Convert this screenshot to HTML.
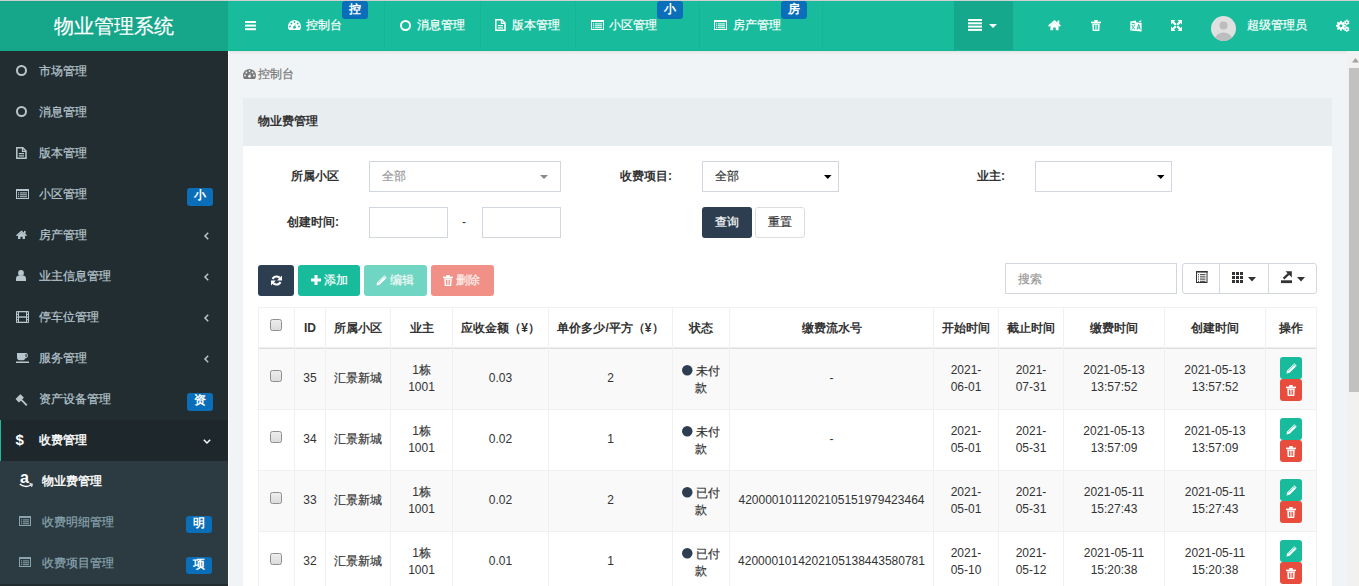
<!DOCTYPE html><html><head><meta charset="utf-8"><style>
html,body{margin:0;padding:0}
body{width:1359px;height:586px;overflow:hidden;position:relative;background:#f1f4f6;font-family:"Liberation Sans",sans-serif;font-size:12px;color:#333}
.t{position:absolute;white-space:nowrap}
.k{-webkit-text-stroke-width:0.2px}
.bd .k{-webkit-text-stroke-width:0}
.med .k{-webkit-text-stroke-width:0.4px}
.b{position:absolute}
.i{position:absolute;overflow:visible}
</style></head><body>
<div class="b" style="left:0px;top:0px;width:1359px;height:1px;background:#d2cfd0;"></div>
<div class="b" style="left:0px;top:1px;width:228px;height:50px;background:#16a68a;"></div>
<div class="t" style="left:0px;top:11px;font-size:20px;line-height:30px;color:#fff;font-weight:normal;width:228px;text-align:center"><span class="k">物业管理系统</span></div>
<div class="b" style="left:228px;top:1px;width:1131px;height:50px;background:#18bc9c;"></div>
<svg class="i" style="left:245px;top:21px;" width="11" height="10" viewBox="0 0 11 10"><rect x="0" y="0" width="11" height="2" fill="#fff"/><rect x="0" y="3.6" width="11" height="2" fill="#fff"/><rect x="0" y="7.2" width="11" height="2" fill="#fff"/></svg>
<div class="b" style="left:384px;top:1px;width:1px;height:50px;background:rgba(0,0,0,0.035);"></div>
<div class="b" style="left:480px;top:1px;width:1px;height:50px;background:rgba(0,0,0,0.035);"></div>
<div class="b" style="left:575px;top:1px;width:1px;height:50px;background:rgba(0,0,0,0.035);"></div>
<div class="b" style="left:699px;top:1px;width:1px;height:50px;background:rgba(0,0,0,0.035);"></div>
<div class="b" style="left:822px;top:1px;width:1px;height:50px;background:rgba(0,0,0,0.035);"></div>
<svg class="i" style="left:288px;top:20px;" width="13" height="10" viewBox="0 0 13 10"><path d="M1.02 10 A6.5 6.5 0 1 1 11.98 10 Z" fill="#fff"/><circle cx="6.5" cy="2" r="0.9" fill="#18bc9c"/><circle cx="3.4" cy="3.5" r="0.9" fill="#18bc9c"/><circle cx="9.6" cy="3.5" r="0.9" fill="#18bc9c"/><circle cx="2" cy="6.5" r="0.9" fill="#18bc9c"/><circle cx="11" cy="6.5" r="0.9" fill="#18bc9c"/><circle cx="6.5" cy="7.3" r="1.4" fill="#18bc9c"/><path d="M6.2 7 L7.3 3 L7.2 7.3Z" fill="#18bc9c"/></svg>
<div class="t" style="left:306px;top:15px;font-size:12px;line-height:20px;color:#fff;font-weight:normal;"><span class="k">控制台</span></div>
<div class="b" style="left:342px;top:1px;width:26px;height:18px;background:#0a6eb9;border-radius:3px"></div><div class="t bd" style="left:342px;top:0.30000000000000004px;width:26px;text-align:center;font-size:12px;line-height:18px;color:#fff;font-weight:bold">控</div>
<svg class="i" style="left:400px;top:19.5px;" width="11" height="11" viewBox="0 0 11 11"><circle cx="5.5" cy="5.5" r="4.5" fill="none" stroke="#fff" stroke-width="2"/></svg>
<div class="t" style="left:417px;top:15px;font-size:12px;line-height:20px;color:#fff;font-weight:normal;"><span class="k">消息管理</span></div>
<svg class="i" style="left:495px;top:19px;" width="11" height="12" viewBox="0 0 11 12"><path d="M0.8 0.8 H6.8 L10 4 V11.2 H0.8 Z" fill="none" stroke="#fff" stroke-width="1.5"/><path d="M6.5 0.8 V4.3 H10" fill="none" stroke="#fff" stroke-width="1.3"/><rect x="2.8" y="6" width="5.2" height="1.2" fill="#fff"/><rect x="2.8" y="8.3" width="5.2" height="1.2" fill="#fff"/></svg>
<div class="t" style="left:512px;top:15px;font-size:12px;line-height:20px;color:#fff;font-weight:normal;"><span class="k">版本管理</span></div>
<svg class="i" style="left:591px;top:20px;" width="13" height="10" viewBox="0 0 13 10"><rect x="0.5" y="0.5" width="12" height="9" fill="none" stroke="#fff" stroke-width="1"/><rect x="0" y="0" width="13" height="2" fill="#fff"/><rect x="2" y="3.4" width="1.2" height="1" fill="#fff"/><rect x="4" y="3.4" width="7" height="1" fill="#fff"/><rect x="2" y="5.3" width="1.2" height="1" fill="#fff"/><rect x="4" y="5.3" width="7" height="1" fill="#fff"/><rect x="2" y="7.199999999999999" width="1.2" height="1" fill="#fff"/><rect x="4" y="7.199999999999999" width="7" height="1" fill="#fff"/></svg>
<div class="t" style="left:609px;top:15px;font-size:12px;line-height:20px;color:#fff;font-weight:normal;"><span class="k">小区管理</span></div>
<div class="b" style="left:657px;top:1px;width:26px;height:18px;background:#0a6eb9;border-radius:3px"></div><div class="t bd" style="left:657px;top:0.30000000000000004px;width:26px;text-align:center;font-size:12px;line-height:18px;color:#fff;font-weight:bold">小</div>
<svg class="i" style="left:714px;top:20px;" width="13" height="10" viewBox="0 0 13 10"><rect x="0.5" y="0.5" width="12" height="9" fill="none" stroke="#fff" stroke-width="1"/><rect x="0" y="0" width="13" height="2" fill="#fff"/><rect x="2" y="3.4" width="1.2" height="1" fill="#fff"/><rect x="4" y="3.4" width="7" height="1" fill="#fff"/><rect x="2" y="5.3" width="1.2" height="1" fill="#fff"/><rect x="4" y="5.3" width="7" height="1" fill="#fff"/><rect x="2" y="7.199999999999999" width="1.2" height="1" fill="#fff"/><rect x="4" y="7.199999999999999" width="7" height="1" fill="#fff"/></svg>
<div class="t" style="left:733px;top:15px;font-size:12px;line-height:20px;color:#fff;font-weight:normal;"><span class="k">房产管理</span></div>
<div class="b" style="left:781px;top:1px;width:26px;height:18px;background:#0a6eb9;border-radius:3px"></div><div class="t bd" style="left:781px;top:0.30000000000000004px;width:26px;text-align:center;font-size:12px;line-height:18px;color:#fff;font-weight:bold">房</div>
<div class="b" style="left:954px;top:1px;width:59px;height:50px;background:rgba(0,0,0,0.1);"></div>
<svg class="i" style="left:968px;top:18.5px;" width="14" height="12" viewBox="0 0 14 12"><rect x="0" y="0" width="14" height="2" fill="#fff"/><rect x="0" y="3.3" width="14" height="2" fill="#fff"/><rect x="0" y="6.6" width="14" height="2" fill="#fff"/><rect x="0" y="9.9" width="14" height="2" fill="#fff"/></svg>
<svg class="i" style="left:989px;top:24px;" width="8" height="4" viewBox="0 0 8 4"><path d="M0 0 H8 L4.0 4 Z" fill="#fff"/></svg>
<svg class="i" style="left:1048px;top:19.8px;" width="13" height="10.2" viewBox="0 0 14 11"><path d="M7 0 L14 6 L12.6 7.3 L7 2.6 L1.4 7.3 L0 6 Z" fill="#fff"/><path d="M2.6 6.2 L7 2.7 L11.4 6.2 V11 H8.4 V8 H5.6 V11 H2.6 Z" fill="#fff"/><rect x="10.2" y="0.6" width="2" height="3.5" fill="#fff"/></svg>
<svg class="i" style="left:1091px;top:20px;" width="10" height="11" viewBox="0 0 10 11"><rect x="0" y="1.6" width="10" height="1.6" fill="#fff"/><rect x="3.3" y="0" width="3.4" height="2" fill="#fff"/><path d="M1.2 3.6 H8.8 L8.3 11 H1.7 Z" fill="#fff"/><rect x="3" y="4.8" width="0.9" height="5" fill="#18bc9c"/><rect x="4.6" y="4.8" width="0.9" height="5" fill="#18bc9c"/><rect x="6.2" y="4.8" width="0.9" height="5" fill="#18bc9c"/></svg>
<svg class="i" style="left:1130px;top:19.5px;" width="12" height="12" viewBox="0 0 12 12"><path d="M0.3 1.6 L6 0.6 V11 L0.3 10.4 Z" fill="#fff"/><path d="M6 2.2 L11.6 3 V11.6 L6 11 Z" fill="#fff"/><path d="M8.6 1.8 L11.2 0 V2.6 Z" fill="#fff"/><path d="M1.6 3.6 H4.8 M3.2 2.6 V3.6 M2 5 C2.6 7.4 3.6 8.6 4.8 9.2 M4.6 4.6 C4 7.2 3 8.6 1.6 9.2" stroke="#18bc9c" stroke-width="0.9" fill="none"/><path d="M7.1 9.6 L8.7 4.4 L10.3 9.6 M7.7 8 H9.7" stroke="#18bc9c" stroke-width="1" fill="none"/></svg>
<svg class="i" style="left:1171px;top:20px;" width="11" height="11" viewBox="0 0 11 11"><path d="M0 0 H4.5 L3 1.5 L5.5 4 L4 5.5 L1.5 3 L0 4.5 Z" fill="#fff"/><path d="M11 0 V4.5 L9.5 3 L7 5.5 L5.5 4 L8 1.5 L6.5 0 Z" fill="#fff"/><path d="M0 11 V6.5 L1.5 8 L4 5.5 L5.5 7 L3 9.5 L4.5 11 Z" fill="#fff"/><path d="M11 11 H6.5 L8 9.5 L5.5 7 L7 5.5 L9.5 8 L11 6.5 Z" fill="#fff"/></svg>
<svg class="i" style="left:1211px;top:16px;" width="25" height="25" viewBox="0 0 25 25"><defs><clipPath id="av"><circle cx="12.5" cy="12.5" r="12.5"/></clipPath></defs><circle cx="12.5" cy="12.5" r="12.5" fill="#e0e0e0"/><g clip-path="url(#av)"><circle cx="12.5" cy="9.5" r="4" fill="#bdbdbd"/><ellipse cx="12.5" cy="23" rx="8.5" ry="6.5" fill="#bdbdbd"/></g></svg>
<div class="t" style="left:1247px;top:15px;font-size:12px;line-height:20px;color:#fff;font-weight:normal;"><span class="k">超级管理员</span></div>
<svg class="i" style="left:1336px;top:20px;" width="14" height="12" viewBox="0 0 14 12"><g fill="#fff"><circle cx="4.9" cy="5.8" r="3.7"/><rect x="4.0" y="0.8999999999999995" width="1.8" height="9.8" transform="rotate(0 4.9 5.8)"/><rect x="4.0" y="0.8999999999999995" width="1.8" height="9.8" transform="rotate(45 4.9 5.8)"/><rect x="4.0" y="0.8999999999999995" width="1.8" height="9.8" transform="rotate(90 4.9 5.8)"/><rect x="4.0" y="0.8999999999999995" width="1.8" height="9.8" transform="rotate(135 4.9 5.8)"/><rect x="10.200000000000001" y="-0.3999999999999999" width="1.2" height="5.6" transform="rotate(0 10.8 2.4)"/><rect x="10.200000000000001" y="-0.3999999999999999" width="1.2" height="5.6" transform="rotate(60 10.8 2.4)"/><rect x="10.200000000000001" y="-0.3999999999999999" width="1.2" height="5.6" transform="rotate(120 10.8 2.4)"/><circle cx="10.8" cy="2.4" r="2.1"/><rect x="10.200000000000001" y="6.3999999999999995" width="1.2" height="5.6" transform="rotate(0 10.8 9.2)"/><rect x="10.200000000000001" y="6.3999999999999995" width="1.2" height="5.6" transform="rotate(60 10.8 9.2)"/><rect x="10.200000000000001" y="6.3999999999999995" width="1.2" height="5.6" transform="rotate(120 10.8 9.2)"/><circle cx="10.8" cy="9.2" r="2.1"/></g><circle cx="4.9" cy="5.8" r="1.5" fill="#18bc9c"/><circle cx="10.8" cy="2.4" r="0.8" fill="#18bc9c"/><circle cx="10.8" cy="9.2" r="0.8" fill="#18bc9c"/></svg>
<div class="b" style="left:0px;top:51px;width:228px;height:535px;background:#222d32;"></div>
<svg class="i" style="left:16px;top:65.0px;" width="11" height="11" viewBox="0 0 11 11"><circle cx="5.5" cy="5.5" r="4.5" fill="none" stroke="#b8c7ce" stroke-width="2"/></svg>
<div class="t" style="left:39px;top:61.3px;font-size:12px;line-height:20px;color:#b8c7ce;font-weight:normal;"><span class="k">市场管理</span></div>
<svg class="i" style="left:16px;top:106.0px;" width="11" height="11" viewBox="0 0 11 11"><circle cx="5.5" cy="5.5" r="4.5" fill="none" stroke="#b8c7ce" stroke-width="2"/></svg>
<div class="t" style="left:39px;top:102.3px;font-size:12px;line-height:20px;color:#b8c7ce;font-weight:normal;"><span class="k">消息管理</span></div>
<svg class="i" style="left:16px;top:146.5px;" width="11" height="12" viewBox="0 0 11 12"><path d="M0.8 0.8 H6.8 L10 4 V11.2 H0.8 Z" fill="none" stroke="#b8c7ce" stroke-width="1.5"/><path d="M6.5 0.8 V4.3 H10" fill="none" stroke="#b8c7ce" stroke-width="1.3"/><rect x="2.8" y="6" width="5.2" height="1.2" fill="#b8c7ce"/><rect x="2.8" y="8.3" width="5.2" height="1.2" fill="#b8c7ce"/></svg>
<div class="t" style="left:39px;top:143.3px;font-size:12px;line-height:20px;color:#b8c7ce;font-weight:normal;"><span class="k">版本管理</span></div>
<svg class="i" style="left:16px;top:188.5px;" width="13" height="10" viewBox="0 0 13 10"><rect x="0.5" y="0.5" width="12" height="9" fill="none" stroke="#b8c7ce" stroke-width="1"/><rect x="0" y="0" width="13" height="2" fill="#b8c7ce"/><rect x="2" y="3.4" width="1.2" height="1" fill="#b8c7ce"/><rect x="4" y="3.4" width="7" height="1" fill="#b8c7ce"/><rect x="2" y="5.3" width="1.2" height="1" fill="#b8c7ce"/><rect x="4" y="5.3" width="7" height="1" fill="#b8c7ce"/><rect x="2" y="7.199999999999999" width="1.2" height="1" fill="#b8c7ce"/><rect x="4" y="7.199999999999999" width="7" height="1" fill="#b8c7ce"/></svg>
<div class="t" style="left:39px;top:184.3px;font-size:12px;line-height:20px;color:#b8c7ce;font-weight:normal;"><span class="k">小区管理</span></div>
<div class="b" style="left:187px;top:188px;width:26px;height:17.5px;background:#0a6eb9;border-radius:3px"></div><div class="t bd" style="left:187px;top:187.3px;width:26px;text-align:center;font-size:12px;line-height:17.5px;color:#fff;font-weight:bold">小</div>
<svg class="i" style="left:16px;top:229.5px;" width="11" height="9.5" viewBox="0 0 14 11"><path d="M7 0 L14 6 L12.6 7.3 L7 2.6 L1.4 7.3 L0 6 Z" fill="#b8c7ce"/><path d="M2.6 6.2 L7 2.7 L11.4 6.2 V11 H8.4 V8 H5.6 V11 H2.6 Z" fill="#b8c7ce"/><rect x="10.2" y="0.6" width="2" height="3.5" fill="#b8c7ce"/></svg>
<div class="t" style="left:39px;top:225.3px;font-size:12px;line-height:20px;color:#b8c7ce;font-weight:normal;"><span class="k">房产管理</span></div>
<svg class="i" style="left:203.5px;top:232.0px;" width="5" height="8" viewBox="0 0 5 8"><path d="M4.2 0.8 L1 4 L4.2 7.2" fill="none" stroke="#b8c7ce" stroke-width="1.5"/></svg>
<svg class="i" style="left:16px;top:270.0px;" width="10" height="11" viewBox="0 0 10 11"><circle cx="5" cy="2.9" r="2.9" fill="#b8c7ce"/><path d="M0 11 V8.5 C0 6.5 1.5 5.5 3 5.5 H7 C8.5 5.5 10 6.5 10 8.5 V11 Z" fill="#b8c7ce"/></svg>
<div class="t" style="left:39px;top:266.3px;font-size:12px;line-height:20px;color:#b8c7ce;font-weight:normal;"><span class="k">业主信息管理</span></div>
<svg class="i" style="left:203.5px;top:273.0px;" width="5" height="8" viewBox="0 0 5 8"><path d="M4.2 0.8 L1 4 L4.2 7.2" fill="none" stroke="#b8c7ce" stroke-width="1.5"/></svg>
<svg class="i" style="left:16px;top:310.5px;" width="13" height="12" viewBox="0 0 13 12"><rect x="0" y="0" width="13" height="12" rx="1" fill="#b8c7ce"/><rect x="3" y="1.3" width="7" height="4" fill="#222d32"/><rect x="3" y="6.7" width="7" height="4" fill="#222d32"/><rect x="1" y="1.3" width="1" height="1.5" fill="#222d32"/><rect x="1" y="4" width="1" height="1.5" fill="#222d32"/><rect x="1" y="6.7" width="1" height="1.5" fill="#222d32"/><rect x="1" y="9.3" width="1" height="1.5" fill="#222d32"/><rect x="11" y="1.3" width="1" height="1.5" fill="#222d32"/><rect x="11" y="4" width="1" height="1.5" fill="#222d32"/><rect x="11" y="6.7" width="1" height="1.5" fill="#222d32"/><rect x="11" y="9.3" width="1" height="1.5" fill="#222d32"/></svg>
<div class="t" style="left:39px;top:307.3px;font-size:12px;line-height:20px;color:#b8c7ce;font-weight:normal;"><span class="k">停车位管理</span></div>
<svg class="i" style="left:203.5px;top:314.0px;" width="5" height="8" viewBox="0 0 5 8"><path d="M4.2 0.8 L1 4 L4.2 7.2" fill="none" stroke="#b8c7ce" stroke-width="1.5"/></svg>
<svg class="i" style="left:16px;top:352.5px;" width="13" height="10" viewBox="0 0 13 10"><rect x="0" y="8.5" width="13" height="1.5" fill="#b8c7ce"/><path d="M1 0 H10 C12.5 0 12.5 5 10 5 H9.5 C9 6.5 8 7.3 6.5 7.3 H3.5 C2 7.3 1 6 1 4.5 Z" fill="#b8c7ce"/><rect x="9.5" y="1.2" width="1.2" height="2.6" fill="#222d32"/></svg>
<div class="t" style="left:39px;top:348.3px;font-size:12px;line-height:20px;color:#b8c7ce;font-weight:normal;"><span class="k">服务管理</span></div>
<svg class="i" style="left:203.5px;top:355.0px;" width="5" height="8" viewBox="0 0 5 8"><path d="M4.2 0.8 L1 4 L4.2 7.2" fill="none" stroke="#b8c7ce" stroke-width="1.5"/></svg>
<svg class="i" style="left:15.5px;top:392.5px;" width="13" height="12" viewBox="0 0 13 12"><g transform="rotate(-45 6.5 6)"><rect x="1.5" y="1" width="7" height="5" rx="0.5" fill="#b8c7ce"/><rect x="4.2" y="5.5" width="1.8" height="8" fill="#b8c7ce"/></g></svg>
<div class="t" style="left:39px;top:389.3px;font-size:12px;line-height:20px;color:#b8c7ce;font-weight:normal;"><span class="k">资产设备管理</span></div>
<div class="b" style="left:187px;top:393px;width:26px;height:17.5px;background:#0a6eb9;border-radius:3px"></div><div class="t bd" style="left:187px;top:392.3px;width:26px;text-align:center;font-size:12px;line-height:17.5px;color:#fff;font-weight:bold">资</div>
<div class="b" style="left:0px;top:420px;width:228px;height:41px;background:#1e282c;"></div>
<div class="b" style="left:0px;top:420px;width:1px;height:41px;background:#18bc9c;"></div>
<div class="t" style="left:15.5px;top:433px;font-size:15px;line-height:14px;color:#fff;font-weight:bold">$</div>
<div class="t med" style="left:39px;top:430.3px;font-size:12px;line-height:20px;color:#fff;font-weight:normal;"><span class="k">收费管理</span></div>
<svg class="i" style="left:202.5px;top:439px;" width="8" height="5" viewBox="0 0 8 5"><path d="M0.8 0.8 L4 4 L7.2 0.8" fill="none" stroke="#fff" stroke-width="1.5"/></svg>
<div class="b" style="left:0px;top:461px;width:228px;height:123px;background:#2c3b41;"></div>
<div class="t" style="left:20px;top:469.5px;font-size:16px;line-height:16px;color:#fff;font-weight:bold">a</div><svg class="i" style="left:18.5px;top:482.5px;" width="14" height="5" viewBox="0 0 14 5"><path d="M0.8 1 C4 4 9 4.2 12.2 1.8" fill="none" stroke="#fff" stroke-width="1.4"/><path d="M10.5 0.6 L13.2 1.2 L12.6 3.8" fill="none" stroke="#fff" stroke-width="1.1"/></svg>
<div class="t med" style="left:42px;top:470.8px;font-size:12px;line-height:20px;color:#fff;font-weight:normal;"><span class="k">物业费管理</span></div>
<svg class="i" style="left:19px;top:516px;" width="12" height="10" viewBox="0 0 12 10"><rect x="0.5" y="0.5" width="11" height="9" fill="none" stroke="#8aa4af" stroke-width="1"/><rect x="0" y="0" width="12" height="2" fill="#8aa4af"/><rect x="2" y="3.4" width="1.2" height="1" fill="#8aa4af"/><rect x="4" y="3.4" width="6" height="1" fill="#8aa4af"/><rect x="2" y="5.3" width="1.2" height="1" fill="#8aa4af"/><rect x="4" y="5.3" width="6" height="1" fill="#8aa4af"/><rect x="2" y="7.199999999999999" width="1.2" height="1" fill="#8aa4af"/><rect x="4" y="7.199999999999999" width="6" height="1" fill="#8aa4af"/></svg>
<div class="t" style="left:42px;top:512px;font-size:12px;line-height:20px;color:#8aa4af;font-weight:normal;"><span class="k">收费明细管理</span></div>
<div class="b" style="left:186px;top:516px;width:26px;height:17px;background:#0a6eb9;border-radius:3px"></div><div class="t bd" style="left:186px;top:515.3px;width:26px;text-align:center;font-size:12px;line-height:17px;color:#fff;font-weight:bold">明</div>
<svg class="i" style="left:19px;top:557px;" width="12" height="10" viewBox="0 0 12 10"><rect x="0.5" y="0.5" width="11" height="9" fill="none" stroke="#8aa4af" stroke-width="1"/><rect x="0" y="0" width="12" height="2" fill="#8aa4af"/><rect x="2" y="3.4" width="1.2" height="1" fill="#8aa4af"/><rect x="4" y="3.4" width="6" height="1" fill="#8aa4af"/><rect x="2" y="5.3" width="1.2" height="1" fill="#8aa4af"/><rect x="4" y="5.3" width="6" height="1" fill="#8aa4af"/><rect x="2" y="7.199999999999999" width="1.2" height="1" fill="#8aa4af"/><rect x="4" y="7.199999999999999" width="6" height="1" fill="#8aa4af"/></svg>
<div class="t" style="left:42px;top:553px;font-size:12px;line-height:20px;color:#8aa4af;font-weight:normal;"><span class="k">收费项目管理</span></div>
<div class="b" style="left:186px;top:557px;width:26px;height:17px;background:#0a6eb9;border-radius:3px"></div><div class="t bd" style="left:186px;top:556.3px;width:26px;text-align:center;font-size:12px;line-height:17px;color:#fff;font-weight:bold">项</div>
<div class="b" style="left:228px;top:50px;width:1131px;height:1px;background:#12b996;"></div>
<div class="b" style="left:229px;top:51px;width:1118px;height:4px;background:linear-gradient(#e5e1e4,#eceef1 50%,#f1f4f6);"></div>
<div class="b" style="left:228px;top:51px;width:1px;height:535px;background:#ffffff;"></div>
<svg class="i" style="left:243px;top:69px;" width="13" height="10" viewBox="0 0 13 10"><path d="M1.02 10 A6.5 6.5 0 1 1 11.98 10 Z" fill="#777"/><circle cx="6.5" cy="2" r="0.9" fill="#f1f4f6"/><circle cx="3.4" cy="3.5" r="0.9" fill="#f1f4f6"/><circle cx="9.6" cy="3.5" r="0.9" fill="#f1f4f6"/><circle cx="2" cy="6.5" r="0.9" fill="#f1f4f6"/><circle cx="11" cy="6.5" r="0.9" fill="#f1f4f6"/><circle cx="6.5" cy="7.3" r="1.4" fill="#f1f4f6"/><path d="M6.2 7 L7.3 3 L7.2 7.3Z" fill="#f1f4f6"/></svg>
<div class="t" style="left:258px;top:63.5px;font-size:12px;line-height:20px;color:#777;font-weight:normal;"><span class="k">控制台</span></div>
<div class="b" style="left:243px;top:98px;width:1089px;height:48px;background:#e8edf0;"></div>
<div class="t bd" style="left:258px;top:111px;font-size:12px;line-height:20px;color:#333;font-weight:bold;"><span class="k">物业费管理</span></div>
<div class="b" style="left:243px;top:146px;width:1089px;height:440px;background:#fff;"></div>
<div class="t bd" style="left:291px;top:166px;font-size:12px;line-height:20px;color:#333;font-weight:bold;"><span class="k">所属小区</span></div>
<div class="b" style="left:369px;top:161px;width:190px;height:29px;border:1px solid #d2d6de;background:#fff"></div>
<div class="t" style="left:382px;top:166px;font-size:12px;line-height:20px;color:#999;font-weight:normal;"><span class="k">全部</span></div>
<svg class="i" style="left:540px;top:175px;" width="8" height="4" viewBox="0 0 8 4"><path d="M0 0 H8 L4.0 4 Z" fill="#888"/></svg>
<div class="t bd" style="left:620px;top:166px;font-size:12px;line-height:20px;color:#333;font-weight:bold;"><span class="k">收费项目</span>:</div>
<div class="b" style="left:702px;top:161px;width:135px;height:29px;border:1px solid #d2d6de;background:#fff"></div>
<div class="t" style="left:715px;top:166px;font-size:12px;line-height:20px;color:#333;font-weight:normal;"><span class="k">全部</span></div>
<svg class="i" style="left:824px;top:175px;" width="7.5" height="4" viewBox="0 0 7.5 4"><path d="M0 0 H7.5 L3.75 4 Z" fill="#000"/></svg>
<div class="t bd" style="left:977px;top:166px;font-size:12px;line-height:20px;color:#333;font-weight:bold;"><span class="k">业主</span>:</div>
<div class="b" style="left:1035px;top:161px;width:135px;height:29px;border:1px solid #d2d6de;background:#fff"></div>
<svg class="i" style="left:1157px;top:175px;" width="7.5" height="4" viewBox="0 0 7.5 4"><path d="M0 0 H7.5 L3.75 4 Z" fill="#000"/></svg>
<div class="t bd" style="left:287px;top:212px;font-size:12px;line-height:20px;color:#333;font-weight:bold;"><span class="k">创建时间</span>:</div>
<div class="b" style="left:369px;top:207px;width:77px;height:29px;border:1px solid #d2d6de;background:#fff"></div>
<div class="t" style="left:462px;top:212px;font-size:12px;line-height:20px;color:#333;font-weight:normal;">-</div>
<div class="b" style="left:482px;top:207px;width:77px;height:29px;border:1px solid #d2d6de;background:#fff"></div>
<div class="b" style="left:702px;top:207px;width:50px;height:31px;background:#2c3e50;border-radius:3px"></div>
<div class="t" style="left:715px;top:212px;font-size:12px;line-height:20px;color:#fff;font-weight:normal;"><span class="k">查询</span></div>
<div class="b" style="left:755px;top:207px;width:48px;height:29px;background:#fff;border:1px solid #ddd;border-radius:3px"></div>
<div class="t" style="left:768px;top:212px;font-size:12px;line-height:20px;color:#333;font-weight:normal;"><span class="k">重置</span></div>
<div class="b" style="left:258px;top:265px;width:36px;height:31px;background:#2c3e50;border-radius:3px"></div>
<svg class="i" style="left:270.5px;top:275px;" width="11" height="11" viewBox="0 0 11 11"><path d="M9.5 4.5 A4.2 4.2 0 0 0 1.6 4" fill="none" stroke="#fff" stroke-width="2"/><path d="M1.5 6.5 A4.2 4.2 0 0 0 9.4 7" fill="none" stroke="#fff" stroke-width="2"/><path d="M11 0.5 V5.5 H6 Z" fill="#fff"/><path d="M0 10.5 V5.5 H5 Z" fill="#fff"/></svg>
<div class="b" style="left:298px;top:265px;width:62px;height:31px;background:#18bc9c;border-radius:3px"></div>
<svg class="i" style="left:311px;top:275px;" width="10" height="10" viewBox="0 0 10 10"><rect x="3.5" y="0" width="3" height="10" fill="#fff"/><rect x="0" y="3.5" width="10" height="3" fill="#fff"/></svg>
<div class="t" style="left:323.5px;top:270px;font-size:12px;line-height:20px;color:#fff;font-weight:normal;"><span class="k">添加</span></div>
<div class="b" style="left:364px;top:265px;width:63px;height:31px;background:#18bc9c;border-radius:3px;opacity:0.62"></div>
<svg class="i" style="left:376px;top:275px;" width="11" height="11" viewBox="0 0 11 11"><path d="M8.3 0.3 L10.7 2.7 L3.6 9.8 L0.4 10.6 L1.2 7.4 Z" fill="#fff"/><path d="M2.2 7.9 L8.6 1.5" stroke="#74d7c4" stroke-width="0.7" opacity="0.8"/><path d="M7.5 1.1 L9.9 3.5" stroke="#74d7c4" stroke-width="0.6"/></svg>
<div class="t" style="left:390px;top:270px;font-size:12px;line-height:20px;color:#fff;font-weight:normal;opacity:0.9"><span class="k">编辑</span></div>
<div class="b" style="left:431px;top:265px;width:63px;height:31px;background:#e74c3c;border-radius:3px;opacity:0.62"></div>
<svg class="i" style="left:443px;top:275px;" width="10" height="11" viewBox="0 0 10 11"><rect x="0" y="1.6" width="10" height="1.6" fill="#fff"/><rect x="3.3" y="0" width="3.4" height="2" fill="#fff"/><path d="M1.2 3.6 H8.8 L8.3 11 H1.7 Z" fill="#fff"/><rect x="3" y="4.8" width="0.9" height="5" fill="#ef8a80"/><rect x="4.6" y="4.8" width="0.9" height="5" fill="#ef8a80"/><rect x="6.2" y="4.8" width="0.9" height="5" fill="#ef8a80"/></svg>
<div class="t" style="left:456px;top:270px;font-size:12px;line-height:20px;color:#fff;font-weight:normal;opacity:0.9"><span class="k">删除</span></div>
<div class="b" style="left:1005px;top:263px;width:170px;height:29px;border:1px solid #d2d6de;background:#fff"></div>
<div class="t" style="left:1018px;top:268.5px;font-size:12px;line-height:20px;color:#999;font-weight:normal;"><span class="k">搜索</span></div>
<div class="b" style="left:1182px;top:263px;width:133px;height:29px;border:1px solid #d2d6de;border-radius:3px;background:#fff"></div>
<div class="b" style="left:1219px;top:264px;width:1px;height:29px;background:#d2d6de;"></div>
<div class="b" style="left:1268px;top:264px;width:1px;height:29px;background:#d2d6de;"></div>
<svg class="i" style="left:1196px;top:271px;" width="12" height="12" viewBox="0 0 12 12"><rect x="0.5" y="0.5" width="10.5" height="11" fill="none" stroke="#333" stroke-width="1"/><rect x="0" y="0" width="11.5" height="1.6" fill="#333"/><rect x="2" y="3.2" width="1" height="1" fill="#333"/><rect x="4" y="3.2" width="5.5" height="1" fill="#333"/><rect x="2" y="5.4" width="1" height="1" fill="#333"/><rect x="4" y="5.4" width="5.5" height="1" fill="#333"/><rect x="2" y="7.6000000000000005" width="1" height="1" fill="#333"/><rect x="4" y="7.6000000000000005" width="5.5" height="1" fill="#333"/><rect x="2" y="9.8" width="1" height="1" fill="#333"/><rect x="4" y="9.8" width="5.5" height="1" fill="#333"/></svg>
<svg class="i" style="left:1232px;top:272px;" width="11" height="11" viewBox="0 0 11 11"><rect x="0" y="0" width="3" height="3" fill="#333"/><rect x="0" y="4" width="3" height="3" fill="#333"/><rect x="0" y="8" width="3" height="3" fill="#333"/><rect x="4" y="0" width="3" height="3" fill="#333"/><rect x="4" y="4" width="3" height="3" fill="#333"/><rect x="4" y="8" width="3" height="3" fill="#333"/><rect x="8" y="0" width="3" height="3" fill="#333"/><rect x="8" y="4" width="3" height="3" fill="#333"/><rect x="8" y="8" width="3" height="3" fill="#333"/></svg>
<svg class="i" style="left:1248px;top:277px;" width="8" height="4.5" viewBox="0 0 8 4.5"><path d="M0 0 H8 L4.0 4.5 Z" fill="#333"/></svg>
<svg class="i" style="left:1280.5px;top:271px;" width="12" height="13" viewBox="0 0 12 13"><rect x="0" y="9.3" width="11" height="2.8" fill="#333"/><path d="M4.5 0.3 H10.8 V6.6 Z" fill="#333"/><path d="M2.6 7.6 L7.6 2.9" stroke="#333" stroke-width="2.2"/></svg>
<svg class="i" style="left:1296.5px;top:277px;" width="8" height="4.5" viewBox="0 0 8 4.5"><path d="M0 0 H8 L4.0 4.5 Z" fill="#333"/></svg>
<div class="b" style="left:258px;top:307px;width:1059px;height:40px;background:#fff;"></div>
<div class="b" style="left:258px;top:349px;width:1059px;height:60px;background:#f9f9f9;"></div>
<div class="b" style="left:258px;top:410px;width:1059px;height:60px;background:#fff;"></div>
<div class="b" style="left:258px;top:471px;width:1059px;height:60px;background:#f9f9f9;"></div>
<div class="b" style="left:258px;top:532px;width:1059px;height:60px;background:#fff;"></div>
<div class="b" style="left:258px;top:307px;width:1059px;height:1px;background:#f0f0f0;"></div>
<div class="b" style="left:258px;top:347px;width:1059px;height:1px;background:#eeeeee;"></div>
<div class="b" style="left:258px;top:348px;width:1059px;height:1px;background:#dedede;"></div>
<div class="b" style="left:258px;top:409px;width:1059px;height:1px;background:#f0f0f0;"></div>
<div class="b" style="left:258px;top:470px;width:1059px;height:1px;background:#f0f0f0;"></div>
<div class="b" style="left:258px;top:531px;width:1059px;height:1px;background:#f0f0f0;"></div>
<div class="b" style="left:258px;top:307px;width:1px;height:279px;background:#f0f0f0;"></div>
<div class="b" style="left:294px;top:307px;width:1px;height:279px;background:#f0f0f0;"></div>
<div class="b" style="left:325px;top:307px;width:1px;height:279px;background:#f0f0f0;"></div>
<div class="b" style="left:390px;top:307px;width:1px;height:279px;background:#f0f0f0;"></div>
<div class="b" style="left:452px;top:307px;width:1px;height:279px;background:#f0f0f0;"></div>
<div class="b" style="left:548px;top:307px;width:1px;height:279px;background:#f0f0f0;"></div>
<div class="b" style="left:672px;top:307px;width:1px;height:279px;background:#f0f0f0;"></div>
<div class="b" style="left:729px;top:307px;width:1px;height:279px;background:#f0f0f0;"></div>
<div class="b" style="left:933px;top:307px;width:1px;height:279px;background:#f0f0f0;"></div>
<div class="b" style="left:998px;top:307px;width:1px;height:279px;background:#f0f0f0;"></div>
<div class="b" style="left:1063px;top:307px;width:1px;height:279px;background:#f0f0f0;"></div>
<div class="b" style="left:1164px;top:307px;width:1px;height:279px;background:#f0f0f0;"></div>
<div class="b" style="left:1265px;top:307px;width:1px;height:279px;background:#f0f0f0;"></div>
<div class="b" style="left:1316px;top:307px;width:1px;height:279px;background:#f0f0f0;"></div>
<div class="b c bd" style="left:295px;top:309px;width:30px;height:39px;display:flex;align-items:center;justify-content:center;text-align:center;line-height:17px;color:#333;font-weight:bold"><div>ID</div></div>
<div class="b c bd" style="left:326px;top:309px;width:64px;height:39px;display:flex;align-items:center;justify-content:center;text-align:center;line-height:17px;color:#333;font-weight:bold"><div><span class="k">所属小区</span></div></div>
<div class="b c bd" style="left:391px;top:309px;width:61px;height:39px;display:flex;align-items:center;justify-content:center;text-align:center;line-height:17px;color:#333;font-weight:bold"><div><span class="k">业主</span></div></div>
<div class="b c bd" style="left:453px;top:309px;width:95px;height:39px;display:flex;align-items:center;justify-content:center;text-align:center;line-height:17px;color:#333;font-weight:bold"><div><span class="k">应收金额（</span>¥<span class="k">）</span></div></div>
<div class="b c bd" style="left:549px;top:309px;width:123px;height:39px;display:flex;align-items:center;justify-content:center;text-align:center;line-height:17px;color:#333;font-weight:bold"><div><span class="k">单价多少</span>/<span class="k">平方（</span>¥<span class="k">）</span></div></div>
<div class="b c bd" style="left:673px;top:309px;width:56px;height:39px;display:flex;align-items:center;justify-content:center;text-align:center;line-height:17px;color:#333;font-weight:bold"><div><span class="k">状态</span></div></div>
<div class="b c bd" style="left:730px;top:309px;width:203px;height:39px;display:flex;align-items:center;justify-content:center;text-align:center;line-height:17px;color:#333;font-weight:bold"><div><span class="k">缴费流水号</span></div></div>
<div class="b c bd" style="left:934px;top:309px;width:64px;height:39px;display:flex;align-items:center;justify-content:center;text-align:center;line-height:17px;color:#333;font-weight:bold"><div><span class="k">开始时间</span></div></div>
<div class="b c bd" style="left:999px;top:309px;width:64px;height:39px;display:flex;align-items:center;justify-content:center;text-align:center;line-height:17px;color:#333;font-weight:bold"><div><span class="k">截止时间</span></div></div>
<div class="b c bd" style="left:1064px;top:309px;width:100px;height:39px;display:flex;align-items:center;justify-content:center;text-align:center;line-height:17px;color:#333;font-weight:bold"><div><span class="k">缴费时间</span></div></div>
<div class="b c bd" style="left:1165px;top:309px;width:100px;height:39px;display:flex;align-items:center;justify-content:center;text-align:center;line-height:17px;color:#333;font-weight:bold"><div><span class="k">创建时间</span></div></div>
<div class="b c bd" style="left:1266px;top:309px;width:50px;height:39px;display:flex;align-items:center;justify-content:center;text-align:center;line-height:17px;color:#333;font-weight:bold"><div><span class="k">操作</span></div></div>
<div class="b" style="left:270px;top:319px;width:9.5px;height:9.5px;border:1px solid #8f8f8f;border-radius:2.5px;background:linear-gradient(#ededed,#dcdcdc)"></div>
<div class="b" style="left:270px;top:370px;width:9.5px;height:9.5px;border:1px solid #8f8f8f;border-radius:2.5px;background:linear-gradient(#ededed,#dcdcdc)"></div>
<div class="b c" style="left:295px;top:348px;width:30px;height:60px;display:flex;align-items:center;justify-content:center;text-align:center;line-height:17px;color:#333;font-weight:normal"><div>35</div></div>
<div class="b c" style="left:326px;top:348px;width:64px;height:60px;display:flex;align-items:center;justify-content:center;text-align:center;line-height:17px;color:#333;font-weight:normal"><div><span class="k">汇景新城</span></div></div>
<div class="b c" style="left:391px;top:349px;width:61px;height:60px;display:flex;align-items:center;justify-content:center;text-align:center;line-height:17px;color:#333;font-weight:normal"><div>1<span class="k">栋</span><br>1001</div></div>
<div class="b c" style="left:453px;top:348px;width:95px;height:60px;display:flex;align-items:center;justify-content:center;text-align:center;line-height:17px;color:#333;font-weight:normal"><div>0.03</div></div>
<div class="b c" style="left:549px;top:348px;width:123px;height:60px;display:flex;align-items:center;justify-content:center;text-align:center;line-height:17px;color:#333;font-weight:normal"><div>2</div></div>
<svg class="i" style="left:682.3px;top:365px;" width="10.5" height="10.5" viewBox="0 0 10.5 10.5"><circle cx="5.25" cy="5.25" r="5.25" fill="#2c3e50"/></svg>
<div class="t" style="left:695.5px;top:361px;font-size:12px;line-height:20px;color:#333;font-weight:normal;"><span class="k">未付</span></div>
<div class="t" style="left:695px;top:377.5px;font-size:12px;line-height:20px;color:#333;font-weight:normal;"><span class="k">款</span></div>
<div class="b c" style="left:730px;top:348px;width:203px;height:60px;display:flex;align-items:center;justify-content:center;text-align:center;line-height:17px;color:#333;font-weight:normal"><div>-</div></div>
<div class="b c" style="left:934px;top:349px;width:64px;height:60px;display:flex;align-items:center;justify-content:center;text-align:center;line-height:17px;color:#333;font-weight:normal"><div>2021-<br>06-01</div></div>
<div class="b c" style="left:999px;top:349px;width:64px;height:60px;display:flex;align-items:center;justify-content:center;text-align:center;line-height:17px;color:#333;font-weight:normal"><div>2021-<br>07-31</div></div>
<div class="b c" style="left:1064px;top:349px;width:100px;height:60px;display:flex;align-items:center;justify-content:center;text-align:center;line-height:17px;color:#333;font-weight:normal"><div>2021-05-13<br>13:57:52</div></div>
<div class="b c" style="left:1165px;top:349px;width:100px;height:60px;display:flex;align-items:center;justify-content:center;text-align:center;line-height:17px;color:#333;font-weight:normal"><div>2021-05-13<br>13:57:52</div></div>
<div class="b" style="left:1280px;top:357px;width:22px;height:22px;background:#18bc9c;border-radius:3px"></div>
<svg class="i" style="left:1285.5px;top:362.5px;" width="11" height="11" viewBox="0 0 11 11"><path d="M8.3 0.3 L10.7 2.7 L3.6 9.8 L0.4 10.6 L1.2 7.4 Z" fill="#fff"/><path d="M2.2 7.9 L8.6 1.5" stroke="#18bc9c" stroke-width="0.7" opacity="0.8"/><path d="M7.5 1.1 L9.9 3.5" stroke="#18bc9c" stroke-width="0.6"/></svg>
<div class="b" style="left:1280px;top:379px;width:22px;height:22px;background:#e74c3c;border-radius:3px"></div>
<svg class="i" style="left:1286px;top:384.5px;" width="10" height="11" viewBox="0 0 10 11"><rect x="0" y="1.6" width="10" height="1.6" fill="#fff"/><rect x="3.3" y="0" width="3.4" height="2" fill="#fff"/><path d="M1.2 3.6 H8.8 L8.3 11 H1.7 Z" fill="#fff"/><rect x="3" y="4.8" width="0.9" height="5" fill="#e74c3c"/><rect x="4.6" y="4.8" width="0.9" height="5" fill="#e74c3c"/><rect x="6.2" y="4.8" width="0.9" height="5" fill="#e74c3c"/></svg>
<div class="b" style="left:270px;top:431px;width:9.5px;height:9.5px;border:1px solid #8f8f8f;border-radius:2.5px;background:linear-gradient(#ededed,#dcdcdc)"></div>
<div class="b c" style="left:295px;top:409px;width:30px;height:60px;display:flex;align-items:center;justify-content:center;text-align:center;line-height:17px;color:#333;font-weight:normal"><div>34</div></div>
<div class="b c" style="left:326px;top:409px;width:64px;height:60px;display:flex;align-items:center;justify-content:center;text-align:center;line-height:17px;color:#333;font-weight:normal"><div><span class="k">汇景新城</span></div></div>
<div class="b c" style="left:391px;top:410px;width:61px;height:60px;display:flex;align-items:center;justify-content:center;text-align:center;line-height:17px;color:#333;font-weight:normal"><div>1<span class="k">栋</span><br>1001</div></div>
<div class="b c" style="left:453px;top:409px;width:95px;height:60px;display:flex;align-items:center;justify-content:center;text-align:center;line-height:17px;color:#333;font-weight:normal"><div>0.02</div></div>
<div class="b c" style="left:549px;top:409px;width:123px;height:60px;display:flex;align-items:center;justify-content:center;text-align:center;line-height:17px;color:#333;font-weight:normal"><div>1</div></div>
<svg class="i" style="left:682.3px;top:426px;" width="10.5" height="10.5" viewBox="0 0 10.5 10.5"><circle cx="5.25" cy="5.25" r="5.25" fill="#2c3e50"/></svg>
<div class="t" style="left:695.5px;top:422px;font-size:12px;line-height:20px;color:#333;font-weight:normal;"><span class="k">未付</span></div>
<div class="t" style="left:695px;top:438.5px;font-size:12px;line-height:20px;color:#333;font-weight:normal;"><span class="k">款</span></div>
<div class="b c" style="left:730px;top:409px;width:203px;height:60px;display:flex;align-items:center;justify-content:center;text-align:center;line-height:17px;color:#333;font-weight:normal"><div>-</div></div>
<div class="b c" style="left:934px;top:410px;width:64px;height:60px;display:flex;align-items:center;justify-content:center;text-align:center;line-height:17px;color:#333;font-weight:normal"><div>2021-<br>05-01</div></div>
<div class="b c" style="left:999px;top:410px;width:64px;height:60px;display:flex;align-items:center;justify-content:center;text-align:center;line-height:17px;color:#333;font-weight:normal"><div>2021-<br>05-31</div></div>
<div class="b c" style="left:1064px;top:410px;width:100px;height:60px;display:flex;align-items:center;justify-content:center;text-align:center;line-height:17px;color:#333;font-weight:normal"><div>2021-05-13<br>13:57:09</div></div>
<div class="b c" style="left:1165px;top:410px;width:100px;height:60px;display:flex;align-items:center;justify-content:center;text-align:center;line-height:17px;color:#333;font-weight:normal"><div>2021-05-13<br>13:57:09</div></div>
<div class="b" style="left:1280px;top:418px;width:22px;height:22px;background:#18bc9c;border-radius:3px"></div>
<svg class="i" style="left:1285.5px;top:423.5px;" width="11" height="11" viewBox="0 0 11 11"><path d="M8.3 0.3 L10.7 2.7 L3.6 9.8 L0.4 10.6 L1.2 7.4 Z" fill="#fff"/><path d="M2.2 7.9 L8.6 1.5" stroke="#18bc9c" stroke-width="0.7" opacity="0.8"/><path d="M7.5 1.1 L9.9 3.5" stroke="#18bc9c" stroke-width="0.6"/></svg>
<div class="b" style="left:1280px;top:440px;width:22px;height:22px;background:#e74c3c;border-radius:3px"></div>
<svg class="i" style="left:1286px;top:445.5px;" width="10" height="11" viewBox="0 0 10 11"><rect x="0" y="1.6" width="10" height="1.6" fill="#fff"/><rect x="3.3" y="0" width="3.4" height="2" fill="#fff"/><path d="M1.2 3.6 H8.8 L8.3 11 H1.7 Z" fill="#fff"/><rect x="3" y="4.8" width="0.9" height="5" fill="#e74c3c"/><rect x="4.6" y="4.8" width="0.9" height="5" fill="#e74c3c"/><rect x="6.2" y="4.8" width="0.9" height="5" fill="#e74c3c"/></svg>
<div class="b" style="left:270px;top:492px;width:9.5px;height:9.5px;border:1px solid #8f8f8f;border-radius:2.5px;background:linear-gradient(#ededed,#dcdcdc)"></div>
<div class="b c" style="left:295px;top:470px;width:30px;height:60px;display:flex;align-items:center;justify-content:center;text-align:center;line-height:17px;color:#333;font-weight:normal"><div>33</div></div>
<div class="b c" style="left:326px;top:470px;width:64px;height:60px;display:flex;align-items:center;justify-content:center;text-align:center;line-height:17px;color:#333;font-weight:normal"><div><span class="k">汇景新城</span></div></div>
<div class="b c" style="left:391px;top:471px;width:61px;height:60px;display:flex;align-items:center;justify-content:center;text-align:center;line-height:17px;color:#333;font-weight:normal"><div>1<span class="k">栋</span><br>1001</div></div>
<div class="b c" style="left:453px;top:470px;width:95px;height:60px;display:flex;align-items:center;justify-content:center;text-align:center;line-height:17px;color:#333;font-weight:normal"><div>0.02</div></div>
<div class="b c" style="left:549px;top:470px;width:123px;height:60px;display:flex;align-items:center;justify-content:center;text-align:center;line-height:17px;color:#333;font-weight:normal"><div>2</div></div>
<svg class="i" style="left:682.3px;top:487px;" width="10.5" height="10.5" viewBox="0 0 10.5 10.5"><circle cx="5.25" cy="5.25" r="5.25" fill="#2c3e50"/></svg>
<div class="t" style="left:695.5px;top:483px;font-size:12px;line-height:20px;color:#333;font-weight:normal;"><span class="k">已付</span></div>
<div class="t" style="left:695px;top:499.5px;font-size:12px;line-height:20px;color:#333;font-weight:normal;"><span class="k">款</span></div>
<div class="b c" style="left:730px;top:470px;width:203px;height:60px;display:flex;align-items:center;justify-content:center;text-align:center;line-height:17px;color:#333;font-weight:normal"><div>4200001011202105151979423464</div></div>
<div class="b c" style="left:934px;top:471px;width:64px;height:60px;display:flex;align-items:center;justify-content:center;text-align:center;line-height:17px;color:#333;font-weight:normal"><div>2021-<br>05-01</div></div>
<div class="b c" style="left:999px;top:471px;width:64px;height:60px;display:flex;align-items:center;justify-content:center;text-align:center;line-height:17px;color:#333;font-weight:normal"><div>2021-<br>05-31</div></div>
<div class="b c" style="left:1064px;top:471px;width:100px;height:60px;display:flex;align-items:center;justify-content:center;text-align:center;line-height:17px;color:#333;font-weight:normal"><div>2021-05-11<br>15:27:43</div></div>
<div class="b c" style="left:1165px;top:471px;width:100px;height:60px;display:flex;align-items:center;justify-content:center;text-align:center;line-height:17px;color:#333;font-weight:normal"><div>2021-05-11<br>15:27:43</div></div>
<div class="b" style="left:1280px;top:479px;width:22px;height:22px;background:#18bc9c;border-radius:3px"></div>
<svg class="i" style="left:1285.5px;top:484.5px;" width="11" height="11" viewBox="0 0 11 11"><path d="M8.3 0.3 L10.7 2.7 L3.6 9.8 L0.4 10.6 L1.2 7.4 Z" fill="#fff"/><path d="M2.2 7.9 L8.6 1.5" stroke="#18bc9c" stroke-width="0.7" opacity="0.8"/><path d="M7.5 1.1 L9.9 3.5" stroke="#18bc9c" stroke-width="0.6"/></svg>
<div class="b" style="left:1280px;top:501px;width:22px;height:22px;background:#e74c3c;border-radius:3px"></div>
<svg class="i" style="left:1286px;top:506.5px;" width="10" height="11" viewBox="0 0 10 11"><rect x="0" y="1.6" width="10" height="1.6" fill="#fff"/><rect x="3.3" y="0" width="3.4" height="2" fill="#fff"/><path d="M1.2 3.6 H8.8 L8.3 11 H1.7 Z" fill="#fff"/><rect x="3" y="4.8" width="0.9" height="5" fill="#e74c3c"/><rect x="4.6" y="4.8" width="0.9" height="5" fill="#e74c3c"/><rect x="6.2" y="4.8" width="0.9" height="5" fill="#e74c3c"/></svg>
<div class="b" style="left:270px;top:553px;width:9.5px;height:9.5px;border:1px solid #8f8f8f;border-radius:2.5px;background:linear-gradient(#ededed,#dcdcdc)"></div>
<div class="b c" style="left:295px;top:531px;width:30px;height:60px;display:flex;align-items:center;justify-content:center;text-align:center;line-height:17px;color:#333;font-weight:normal"><div>32</div></div>
<div class="b c" style="left:326px;top:531px;width:64px;height:60px;display:flex;align-items:center;justify-content:center;text-align:center;line-height:17px;color:#333;font-weight:normal"><div><span class="k">汇景新城</span></div></div>
<div class="b c" style="left:391px;top:532px;width:61px;height:60px;display:flex;align-items:center;justify-content:center;text-align:center;line-height:17px;color:#333;font-weight:normal"><div>1<span class="k">栋</span><br>1001</div></div>
<div class="b c" style="left:453px;top:531px;width:95px;height:60px;display:flex;align-items:center;justify-content:center;text-align:center;line-height:17px;color:#333;font-weight:normal"><div>0.01</div></div>
<div class="b c" style="left:549px;top:531px;width:123px;height:60px;display:flex;align-items:center;justify-content:center;text-align:center;line-height:17px;color:#333;font-weight:normal"><div>1</div></div>
<svg class="i" style="left:682.3px;top:548px;" width="10.5" height="10.5" viewBox="0 0 10.5 10.5"><circle cx="5.25" cy="5.25" r="5.25" fill="#2c3e50"/></svg>
<div class="t" style="left:695.5px;top:544px;font-size:12px;line-height:20px;color:#333;font-weight:normal;"><span class="k">已付</span></div>
<div class="t" style="left:695px;top:560.5px;font-size:12px;line-height:20px;color:#333;font-weight:normal;"><span class="k">款</span></div>
<div class="b c" style="left:730px;top:531px;width:203px;height:60px;display:flex;align-items:center;justify-content:center;text-align:center;line-height:17px;color:#333;font-weight:normal"><div>4200001014202105138443580781</div></div>
<div class="b c" style="left:934px;top:532px;width:64px;height:60px;display:flex;align-items:center;justify-content:center;text-align:center;line-height:17px;color:#333;font-weight:normal"><div>2021-<br>05-10</div></div>
<div class="b c" style="left:999px;top:532px;width:64px;height:60px;display:flex;align-items:center;justify-content:center;text-align:center;line-height:17px;color:#333;font-weight:normal"><div>2021-<br>05-12</div></div>
<div class="b c" style="left:1064px;top:532px;width:100px;height:60px;display:flex;align-items:center;justify-content:center;text-align:center;line-height:17px;color:#333;font-weight:normal"><div>2021-05-11<br>15:20:38</div></div>
<div class="b c" style="left:1165px;top:532px;width:100px;height:60px;display:flex;align-items:center;justify-content:center;text-align:center;line-height:17px;color:#333;font-weight:normal"><div>2021-05-11<br>15:20:38</div></div>
<div class="b" style="left:1280px;top:540px;width:22px;height:22px;background:#18bc9c;border-radius:3px"></div>
<svg class="i" style="left:1285.5px;top:545.5px;" width="11" height="11" viewBox="0 0 11 11"><path d="M8.3 0.3 L10.7 2.7 L3.6 9.8 L0.4 10.6 L1.2 7.4 Z" fill="#fff"/><path d="M2.2 7.9 L8.6 1.5" stroke="#18bc9c" stroke-width="0.7" opacity="0.8"/><path d="M7.5 1.1 L9.9 3.5" stroke="#18bc9c" stroke-width="0.6"/></svg>
<div class="b" style="left:1280px;top:562px;width:22px;height:22px;background:#e74c3c;border-radius:3px"></div>
<svg class="i" style="left:1286px;top:567.5px;" width="10" height="11" viewBox="0 0 10 11"><rect x="0" y="1.6" width="10" height="1.6" fill="#fff"/><rect x="3.3" y="0" width="3.4" height="2" fill="#fff"/><path d="M1.2 3.6 H8.8 L8.3 11 H1.7 Z" fill="#fff"/><rect x="3" y="4.8" width="0.9" height="5" fill="#e74c3c"/><rect x="4.6" y="4.8" width="0.9" height="5" fill="#e74c3c"/><rect x="6.2" y="4.8" width="0.9" height="5" fill="#e74c3c"/></svg>
<div class="b" style="left:1347px;top:51px;width:12px;height:535px;background:#f1f1f1;"></div>
<svg class="i" style="left:1352px;top:57.5px;" width="7" height="5" viewBox="0 0 7 5"><path d="M0 4.5 L3.5 0 L7 4.5 Z" fill="#a3a3a3"/></svg>
<div class="b" style="left:1349px;top:68px;width:10px;height:324px;background:#c1c1c1;"></div>
</body></html>
